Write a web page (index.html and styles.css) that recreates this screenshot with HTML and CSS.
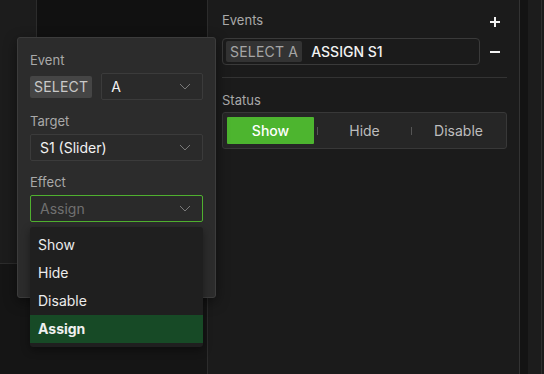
FILE: index.html
```html
<!DOCTYPE html>
<html lang="en">
<head>
  <meta charset="UTF-8">
  <title>Events Editor</title>
  <link rel="stylesheet" href="styles.css">
</head>
<body>
  <div class="app">
    <div class="left-pane">
      <div class="canvas-area">
        <div class="gutter"></div>
        <div class="canvas"></div>
      </div>
      <div class="lower-area"></div>

      <!-- Event editor popover -->
      <div class="popover">
        <div class="field">
          <label class="field-label">Event</label>
          <div class="field-row">
            <span class="tag">SELECT</span>
            <div class="select">
              <span class="select-value">A</span>
              <svg class="chevron" width="12" height="7" viewBox="0 0 12 7"><path d="M1 1l5 5 5-5" fill="none" stroke="#7a7a7a" stroke-width="1"/></svg>
            </div>
          </div>
        </div>
        <div class="field">
          <label class="field-label">Target</label>
          <div class="select">
            <span class="select-value">S1 (Slider)</span>
            <svg class="chevron" width="12" height="7" viewBox="0 0 12 7"><path d="M1 1l5 5 5-5" fill="none" stroke="#7a7a7a" stroke-width="1"/></svg>
          </div>
        </div>
        <div class="field">
          <label class="field-label">Effect</label>
          <div class="select focused">
            <span class="select-value placeholder">Assign</span>
            <svg class="chevron" width="12" height="7" viewBox="0 0 12 7"><path d="M1 1l5 5 5-5" fill="none" stroke="#7a7a7a" stroke-width="1"/></svg>
          </div>
          <ul class="dropdown">
            <li>Show</li>
            <li>Hide</li>
            <li>Disable</li>
            <li class="active">Assign</li>
          </ul>
        </div>
      </div>
    </div>

    <div class="right-pane">
      <div class="events-grid">
        <span class="field-label">Events</span>
        <svg class="icon-btn" width="12" height="12" viewBox="0 0 12 12"><path d="M6 1v10M1 6h10" stroke="#f2f2f2" stroke-width="2"/></svg>
        <div class="event-row">
          <span class="tag small">SELECT A</span>
          <span class="event-text">ASSIGN S1</span>
        </div>
        <svg class="icon-btn" width="12" height="12" viewBox="0 0 12 12"><path d="M1 6h10" stroke="#f2f2f2" stroke-width="2"/></svg>
      </div>

      <div class="divider"></div>

      <div class="section">
        <span class="field-label">Status</span>
        <div class="segmented">
          <span class="segment selected">Show</span>
          <span class="seg-sep"></span>
          <span class="segment">Hide</span>
          <span class="seg-sep"></span>
          <span class="segment">Disable</span>
        </div>
      </div>
    </div>

    <div class="strip"></div>
    <div class="side-pane"></div>
  </div>
</body>
</html>
```

FILE: styles.css
```css
:root {
  --pane-bg: #1b1b1b;
  --canvas-bg: #111111;
  --line: #2c2c2c;
  --popover-bg: #2c2c2c;
  --popover-border: #3c3c3c;
  --field-bg: #2a2a2a;
  --field-border: #3b3b3b;
  --label: #a9a9a9;
  --text: #f2f2f2;
  --accent: #4db52f;
}

* {
  box-sizing: border-box;
}

body {
  margin: 0;
  width: 544px;
  height: 374px;
  overflow: hidden;
  background-color: var(--pane-bg);
  color: var(--text);
  font-family: Inter, "Noto Sans", sans-serif;
  font-size: 14px;
}

.app {
  display: grid;
  grid-template-columns: 208px 312px 8px 14px 1fr;
  height: 374px;
}

/* Left pane */
.left-pane {
  position: relative;
  display: flex;
  flex-direction: column;
  border-right: 1px solid var(--line);
}

.canvas-area {
  display: flex;
  height: 264px;
  border-bottom: 1px solid var(--line);
}

.gutter {
  width: 36px;
  background-color: #1c1c1c;
}

.canvas {
  flex: 1;
  background-color: var(--canvas-bg);
  border-left: 1px solid var(--line);
}

.lower-area {
  flex: 1;
  background-color: #151515;
}

.popover {
  position: absolute;
  top: 37px;
  left: 17px;
  width: 199px;
  height: 261px;
  padding: 14px 12px 0 12px;
  background-color: var(--popover-bg);
  border: 1px solid var(--popover-border);
  border-radius: 3px;
  box-shadow: 0 4px 14px rgba(0, 0, 0, 0.45);
  display: flex;
  flex-direction: column;
  gap: 13px;
}

.field {
  position: relative;
  display: flex;
  flex-direction: column;
  gap: 5px;
}

.field-label {
  font-size: 13px;
  line-height: 16px;
  color: var(--label);
}

.field-row {
  display: flex;
  align-items: center;
  gap: 9px;
}

.tag {
  padding: 0 4px;
  height: 22px;
  line-height: 22px;
  background-color: #454545;
  color: #c9c9c9;
  border-radius: 2px;
  font-size: 14px;
  letter-spacing: 0.2px;
}

.select {
  display: flex;
  align-items: center;
  justify-content: space-between;
  height: 27px;
  padding: 0 11px 0 9px;
  background-color: var(--field-bg);
  border: 1px solid var(--field-border);
  border-radius: 2px;
}

.field-row .select {
  flex: 1;
}

.select.focused {
  border-color: #4fb02f;
}

.select-value {
  color: var(--text);
}

.select-value.placeholder {
  color: #707070;
}

.dropdown {
  position: absolute;
  top: 53px;
  left: 0;
  right: 0;
  margin: 0;
  padding: 4px 0;
  list-style: none;
  background-color: #1f1f1f;
  border-radius: 3px;
  box-shadow: 0 3px 8px rgba(0, 0, 0, 0.4);
}

.dropdown li {
  height: 28px;
  line-height: 28px;
  padding-left: 8px;
  color: #ececec;
}

.dropdown li.active {
  background-color: #174a26;
  font-weight: 700;
  color: #f0f0f0;
}

/* Right pane */
.right-pane {
  display: flex;
  flex-direction: column;
  padding: 12px 12px 0 14px;
  border-right: 1px solid #333;
}

.events-grid {
  display: grid;
  grid-template-columns: 1fr 27px;
  grid-template-rows: 16px 27px;
  row-gap: 10px;
  align-items: center;
}

.icon-btn {
  justify-self: center;
  margin-left: 3px;
}

.events-grid .icon-btn:first-of-type {
  margin-top: 4px;
}

.event-row {
  display: flex;
  align-items: center;
  gap: 9px;
  height: 27px;
  padding: 0 3px;
  border: 1px solid #3a3a3a;
  border-radius: 4px;
}

.tag.small {
  height: 21px;
  line-height: 21px;
  background-color: #333333;
  color: #a6a6a6;
}

.event-text {
  font-weight: 500;
  color: var(--text);
}

.section {
  display: flex;
  flex-direction: column;
  gap: 6px;
}

.divider {
  height: 1px;
  background-color: #333;
  margin: 12px 0 14px 0;
}

.segmented {
  display: flex;
  align-items: center;
  height: 37px;
  padding: 4px;
  margin-top: -2px;
  background-color: #262626;
  border: 1px solid #383838;
  border-radius: 3px;
}

.segment {
  flex: 1;
  height: 27px;
  line-height: 27px;
  text-align: center;
  color: #bdbdbd;
}

.segment.selected {
  background-color: var(--accent);
  color: #ffffff;
  font-weight: 500;
  border-radius: 1px;
}

.seg-sep {
  width: 1px;
  height: 8px;
  margin: 0 3px;
  background-color: #555;
}

.strip {
  background-color: #131313;
}

.side-pane {
  background-color: #1c1c1c;
  border-right: 1px solid #2e2e2e;
}
```
